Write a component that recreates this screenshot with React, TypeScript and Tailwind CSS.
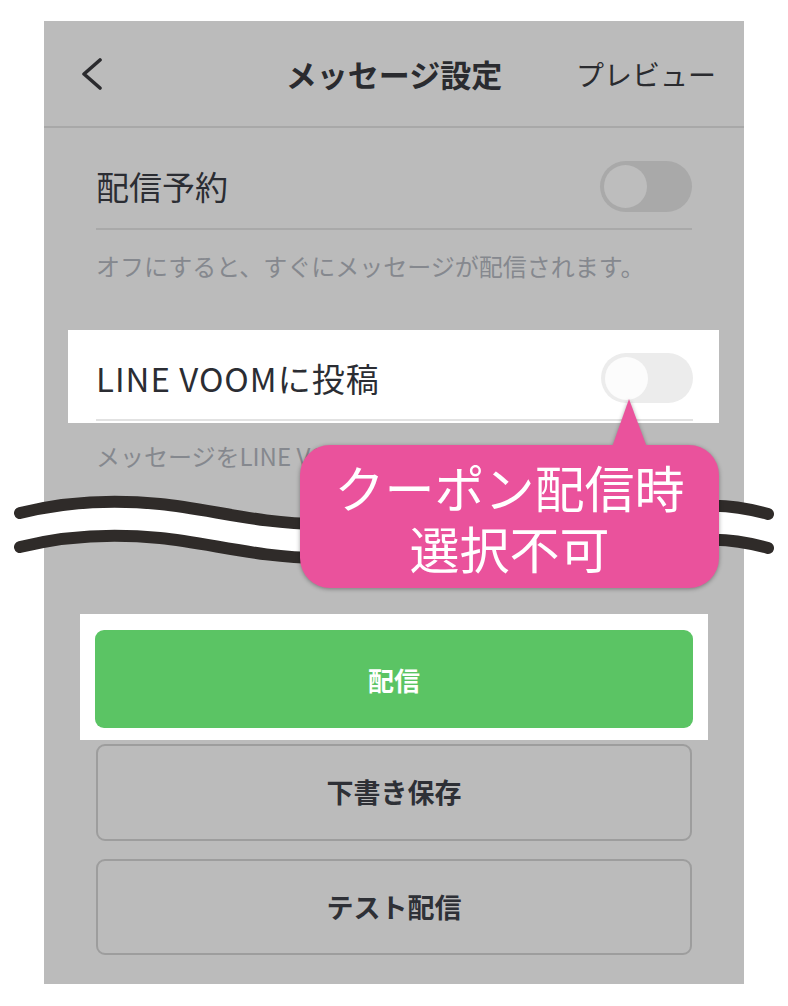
import React from "react";

function Toggle({ dark }: { dark: boolean }) {
  return (
    <div
      className={
        dark
          ? "relative w-[92px] h-[51px] rounded-full bg-[#a9a9a9] shrink-0"
          : "relative w-[92px] h-[50px] rounded-full bg-[#ececec] shrink-0"
      }
    >
      <div
        className={
          dark
            ? "absolute left-[4px] top-[4px] w-[43px] h-[43px] rounded-full bg-[#bdbdbd]"
            : "absolute left-[4px] top-[3.5px] w-[43px] h-[43px] rounded-full bg-[#fcfcfc]"
        }
      />
    </div>
  );
}

export default function App() {
  const wave =
    "M 20 513 C 60 503, 110 499, 160 504 C 210 509, 260 524, 320 524 C 380 524, 430 508, 500 505 C 560 502, 620 516, 660 512 C 690 508, 715 499, 768 514";
  return (
    <div className="relative w-[788px] h-[1006px] bg-white overflow-hidden font-['Noto_Sans_CJK_JP',sans-serif]">
      <div className="ml-[44px] pt-[21px] w-[700px]">
        <div className="w-[700px] h-[963px] bg-[#bbbbbb] flex flex-col">
          {/* header */}
          <div className="h-[107px] border-b-2 border-[#a8a8a8] grid grid-cols-[1fr_auto_1fr] items-center">
            <div className="pl-[38px] flex items-center">
              <svg width="22" height="34" viewBox="0 0 22 34">
                <polyline
                  points="18,3 2,17 18,31"
                  fill="none"
                  stroke="#2b2b2e"
                  strokeWidth="3.6"
                  strokeLinecap="round"
                  strokeLinejoin="round"
                />
              </svg>
            </div>
            <div className="text-[31px] font-bold text-[#2a2b2f] leading-none">メッセージ設定</div>
            <div className="flex justify-end pr-[28px] text-[28px] text-[#2a2b2f] leading-none">プレビュー</div>
          </div>

          {/* row 1 */}
          <div className="mx-[52px] pt-[33px] pb-[16px] border-b-2 border-[#a9a9a9] flex items-center justify-between">
            <div className="text-[33px] text-[#2b2d33] leading-none">配信予約</div>
            <Toggle dark />
          </div>
          <div className="mx-[52px] mt-[20px] text-[24px] leading-[32px] text-[#85888e] whitespace-nowrap">
            オフにすると、すぐにメッセージが配信されます。
          </div>

          {/* row 2 (highlighted) */}
          <div className="ml-[24px] mt-[48px] w-[651px] bg-white pl-[28px] pr-[26px] pb-[2px]">
            <div className="pt-[23px] pb-[16px] border-b-2 border-[#e2e2e2] flex items-center justify-between">
              <div className="text-[33px] tracking-[1px] text-[#2b2d33] leading-none">LINE VOOMに投稿</div>
              <Toggle dark={false} />
            </div>
          </div>
          <div className="mx-[52px] mt-[17px] text-[24px] leading-[32px] text-[#85888e] whitespace-nowrap">
            メッセージをLINE VOOMに投稿します。
          </div>

          {/* buttons */}
          <div className="ml-[36px] mt-[142px] w-[628px] bg-white pl-[15px] pr-[15px] pt-[16px] pb-[12px]">
            <div className="h-[98px] rounded-[9px] bg-[#5bc464] flex items-center justify-center text-white text-[26px] font-bold">
              配信
            </div>
          </div>
          <div className="mx-[52px] mt-[4px] h-[97px] rounded-[9px] border-2 border-[#9d9d9d] flex items-center justify-center text-[27px] font-bold text-[#2e3036]">
            下書き保存
          </div>
          <div className="mx-[52px] mt-[18px] h-[96px] rounded-[9px] border-2 border-[#9d9d9d] flex items-center justify-center text-[27px] font-bold text-[#2e3036]">
            テスト配信
          </div>
        </div>
      </div>

      {/* wave break mark */}
      <svg className="absolute left-0 top-0" width="788" height="1006" viewBox="0 0 788 1006">
        <path d={wave} fill="none" stroke="#ffffff" strokeWidth="34" transform="translate(0,17)" />
        <path d={wave} fill="none" stroke="#2f2b29" strokeWidth="12" strokeLinecap="round" />
        <path d={wave} fill="none" stroke="#2f2b29" strokeWidth="12" strokeLinecap="round" transform="translate(0,34)" />
      </svg>

      {/* callout */}
      <div className="absolute left-[300px] top-[398px] w-[419px] h-[190px] drop-shadow-[0_1px_2px_rgba(0,0,0,0.35)]">
        <svg className="absolute left-0 top-0" width="419" height="60" viewBox="0 0 419 60">
          <polygon points="329,1 311,52 348,52" fill="#ea529c" />
        </svg>
        <div className="absolute left-0 top-[47px] w-[419px] h-[143px] rounded-[30px] bg-[#ea529c] flex flex-col items-center justify-center text-white text-[50px] leading-[61px]">
          <div>クーポン配信時</div>
          <div>選択不可</div>
        </div>
      </div>
    </div>
  );
}
